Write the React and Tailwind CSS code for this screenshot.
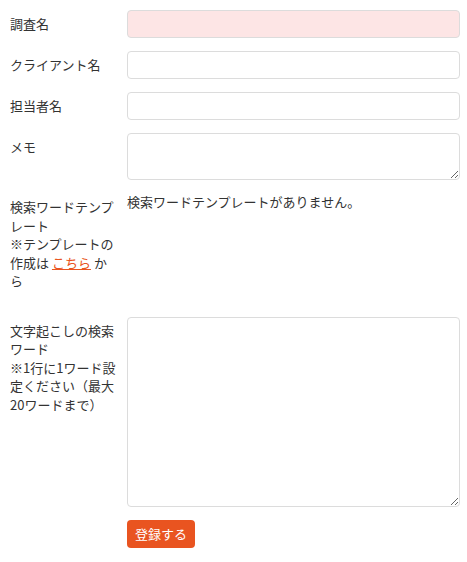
import React from 'react';

const font = { fontFamily: '"Noto Sans CJK JP", "Noto Sans", sans-serif' };

function Row({ label, children, className = '' }) {
  return (
    <div className={`flex gap-[9px] ${className}`}>
      <div className="w-[108px] shrink-0 pt-[5px] text-[13px] leading-[18.5px] text-[#333]">{label}</div>
      <div className="flex-1 min-w-0">{children}</div>
    </div>
  );
}

export default function App() {
  const inputCls = 'block w-full h-[28px] rounded-[4px] border border-[#dcdcdc] px-2 text-[13px] outline-none';

  return (
    <div className="bg-white min-h-screen pl-[10px] pr-[7px] pt-[10px] text-[#333]" style={font}>
      <form className="flex flex-col" onSubmit={e => e.preventDefault()}>
        <Row label="調査名" className="mb-[13px]">
          <input type="text" className={`${inputCls} bg-[#fde5e5]`} />
        </Row>
        <Row label="クライアント名" className="mb-[13px]">
          <input type="text" className={`${inputCls} bg-white`} />
        </Row>
        <Row label="担当者名" className="mb-[13px]">
          <input type="text" className={`${inputCls} bg-white`} />
        </Row>
        <Row label="メモ" className="mb-[13px]">
          <textarea className="block w-full h-[47px] rounded-[4px] border border-[#dcdcdc] bg-white px-2 py-1 text-[13px] outline-none" />
        </Row>
        <Row
          className="mb-[26px]"
          label={
            <>
              検索ワードテンプレート
              <br />
              ※テンプレートの作成は{' '}
              <a href="#" className="text-[#e95420] underline">こちら</a>{' '}
              から
            </>
          }
        >
          <p className="text-[13px] leading-[18.5px]">検索ワードテンプレートがありません。</p>
        </Row>
        <Row
          className="mb-[13px]"
          label={
            <>
              文字起こしの検索ワード
              <br />
              ※1行に1ワード設定ください（最大20ワードまで）
            </>
          }
        >
          <textarea className="block w-full h-[190px] rounded-[4px] border border-[#dcdcdc] bg-white px-2 py-1 text-[13px] outline-none" />
        </Row>
        <div className="pl-[117px]">
          <button
            type="submit"
            className="h-[28px] rounded-[4px] bg-[#e95420] px-[8px] text-[13px] text-white"
          >
            登録する
          </button>
        </div>
      </form>
    </div>
  );
}
